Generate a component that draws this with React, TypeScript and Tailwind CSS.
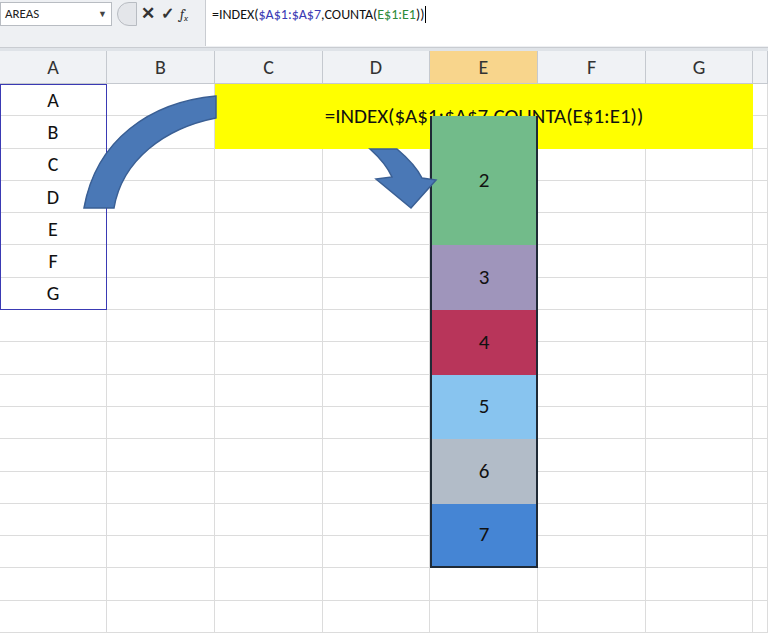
import React from "react";

const cols = ["A", "B", "C", "D", "E", "F", "G", ""];
const letters = ["A", "B", "C", "D", "E", "F", "G"];
const blocks = [
  { n: "2", row: 3, span: 4, bg: "bg-[#72bb8a]", last: false },
  { n: "3", row: 7, span: 2, bg: "bg-[#9f95bb]", last: false },
  { n: "4", row: 9, span: 2, bg: "bg-[#b8355a]", last: false },
  { n: "5", row: 11, span: 2, bg: "bg-[#88c4ef]", last: false },
  { n: "6", row: 13, span: 2, bg: "bg-[#b2bcc8]", last: false },
  { n: "7", row: 15, span: 2, bg: "bg-[#4585d4]", last: true },
];
const rowStart: Record<number, string> = { 3: "row-start-3", 7: "row-start-7", 9: "row-start-9", 11: "row-start-11", 13: "row-start-13", 15: "row-start-15" };
const rowSpan: Record<number, string> = { 2: "row-span-2", 4: "row-span-4" };

export default function App() {
  return (
    <div className="relative w-[768px] h-[636px] overflow-hidden bg-white" style={{ fontFamily: "Calibri, Carlito, 'Open Sans', 'Liberation Sans', sans-serif" }}>
      <div className="h-[48px] bg-[#eef0f3] flex border-b border-[#c9ccd1]">
        <div className="w-[205px] flex flex-col">
          <div className="h-[28px] flex items-center">
            <div className="w-[112px] h-[24px] bg-white border border-[#b8bcc2] flex items-center justify-between px-1 text-[13px] text-[#222]">
              <span>AREAS</span><span className="text-[9px] text-[#444]">▼</span>
            </div>
            <div className="w-[20px] h-[24px] rounded-l-full border border-[#b8bcc2] bg-[#e4e6ea] ml-[5px]" />
            <div className="flex items-center gap-[6px] ml-[4px] text-[#333]">
              <span className="text-[17px] font-bold">✕</span>
              <span className="text-[16px] font-bold">✓</span>
              <span className="text-[14px] italic font-serif">f<sub className="text-[9px]">x</sub></span>
            </div>
          </div>
        </div>
        <div className="flex-1 bg-white border-l border-[#c9ccd1] h-[46px] px-[6px] pt-[4px] text-[14px] text-[#111]">
          =INDEX(<span className="text-[#3a3ab4]">$A$1:$A$7</span>,COUNTA(<span className="text-[#2e8b3a]">E$1:E1</span>))<span className="border-l border-black ml-[1px]" />
        </div>
      </div>
      <div className="h-[3px] bg-[#dfe3e8]" />
      <div className="grid grid-cols-[107px_108px_108px_107px_108px_108px_107px_1fr] grid-rows-[33px_repeat(17,32.3px)]">
        {cols.map((c, i) => (
          <div key={i} className={`row-start-1 flex items-center justify-center text-[20px] text-[#333] border-r border-b border-[#c5c9cf] ${c === "E" ? "bg-[#f8d58c]" : "bg-[#f0f2f5]"}`} style={{ gridColumnStart: i + 1 }}>{c}</div>
        ))}
        {Array.from({ length: 17 }).map((_, r) =>
          cols.map((c, i) => (
            <div key={i + "-" + r} className="border-r border-b border-[#dcdcdc] flex items-center justify-center text-[20px] text-[#111]" style={{ gridRowStart: r + 2, gridColumnStart: i + 1 }}>
              {i === 0 && r < 7 ? letters[r] : ""}
            </div>
          ))
        )}
        <div className="col-start-1 row-start-2 row-span-7 border border-[#3a3ab4] pointer-events-none" />
        <div className="col-start-3 col-span-5 row-start-2 row-span-2 bg-[#ffff00] flex items-center justify-center text-[21px] text-[#111] z-10">
          =INDEX($A$1:$A$7,COUNTA(E$1:E1))
        </div>
        {blocks.map((b) => (
          <div key={b.n} className={`col-start-5 ${rowStart[b.row]} ${rowSpan[b.span]} ${b.bg} border-x-2 border-[#1f2a36] ${b.last ? "border-b-2" : ""} flex items-center justify-center text-[21px] text-[#111] z-10`}>{b.n}</div>
        ))}
      </div>
      <svg className="absolute left-0 top-0 pointer-events-none z-20" width="768" height="636">
        <path d="M216 96 C150 102 96 140 84 208 L114 208 C122 160 165 128 216 118 Z" fill="#4a78b6" stroke="#3a5f94" strokeWidth="1.5" />
        <path d="M370 149 L397 149 C410 160 418 170 422 178 L436 180 L411 208 L376 179 L392 177 C388 168 380 158 370 149 Z" fill="#4a78b6" stroke="#3a5f94" strokeWidth="1.5" />
      </svg>
    </div>
  );
}
